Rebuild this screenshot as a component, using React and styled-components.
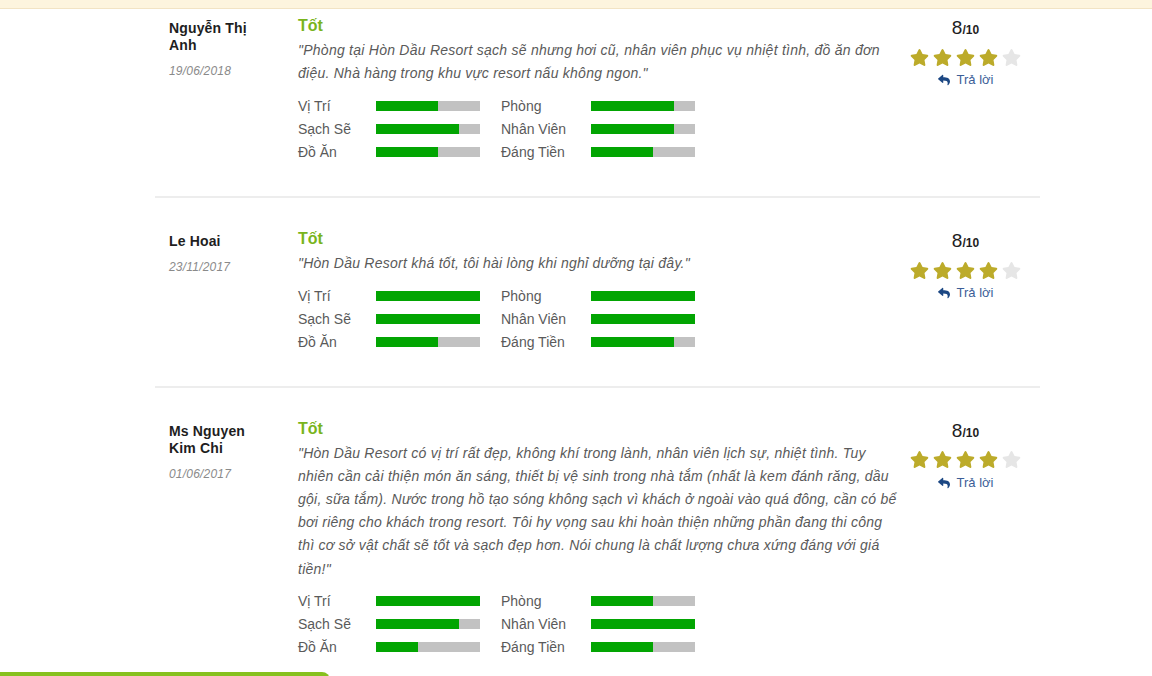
import React from 'react'
import styled, { createGlobalStyle } from 'styled-components'
import { FaStar, FaReply } from 'react-icons/fa'

const GlobalStyle = createGlobalStyle`
  body {
    margin: 0;
    background: #fff;
    font-family: "Liberation Sans", Arial, sans-serif;
    overflow: hidden;
  }
`

const TopBar = styled.div`
  height: 8px;
  background: #fdf4de;
  border-bottom: 1px solid #f2e3c4;
`

const List = styled.div`
  width: 885px;
  margin-left: 155px;
`

const Review = styled.div`
  display: grid;
  grid-template-columns: 129px 600px 135px;
  padding: ${props => (props.isFirst ? '7px 0 33px' : '31px 0 32px')};
  padding-left: 14px;
  ${props => !props.isFirst && `border-top: 2px solid #ededed;`}
`

const Author = styled.div`
  padding-top: 4px;
`

const Name = styled.div`
  width: 92px;
  font-size: 14px;
  line-height: 17px;
  font-weight: bold;
  letter-spacing: 0.15px;
  color: #1e1e1e;
`

const Date = styled.div`
  margin-top: 10px;
  font-size: 12px;
  font-style: italic;
  letter-spacing: 0.2px;
  color: #8a8a8a;
`

const Body = styled.div`
  display: flex;
  flex-direction: column;
`

const Title = styled.div`
  font-size: 16px;
  line-height: 20px;
  font-weight: bold;
  color: #79b41c;
`

const Quote = styled.div`
  margin-top: 3px;
  font-size: 14px;
  line-height: 23.2px;
  font-style: italic;
  letter-spacing: 0.25px;
  color: #5a5a5a;
`

const Ratings = styled.div`
  margin-top: 9px;
  display: grid;
  grid-template-columns: 78px 125px 90px 104px;
  grid-auto-rows: 23px;
  align-items: center;
`

const Label = styled.div`
  font-size: 14px;
  color: #5a5a5a;
`

const Track = styled.div`
  width: 104px;
  height: 10px;
  background: #c2c2c2;
  display: flex;
`

const Fill = styled.div`
  height: 100%;
  background: #02a502;
`

const Score = styled.div`
  display: flex;
  flex-direction: column;
  align-items: center;
  padding-top: 1px;
`

const Mark = styled.div`
  font-size: 19px;
  line-height: 22px;
  color: #1e1e1e;

  small {
    font-size: 12px;
    font-weight: bold;
  }
`

const Stars = styled.div`
  display: flex;
  gap: 4px;
  margin-top: 6px;
  height: 20px;
  align-items: center;
`

const Star = styled(FaStar)`
  color: ${props => (props.$on ? '#bcab2a' : '#e6e6e6')};
`

const Reply = styled.a`
  display: flex;
  align-items: center;
  gap: 7px;
  margin-top: 5px;
  font-size: 13px;
  line-height: 16px;
  color: #3c5e97;
  text-decoration: none;

  svg {
    color: #1c4783;
  }
`

const BottomButton = styled.div`
  position: fixed;
  left: 0;
  bottom: -36px;
  width: 330px;
  height: 40px;
  background: #86c11f;
  border-top-right-radius: 8px;
`

const reviews = [
  {
    name: 'Nguyễn Thị Anh',
    date: '19/06/2018',
    text: '"Phòng tại Hòn Dầu Resort sạch sẽ nhưng hơi cũ, nhân viên phục vụ nhiệt tình, đồ ăn đơn điệu. Nhà hàng trong khu vực resort nấu không ngon."',
    scores: [60, 80, 80, 80, 60, 60],
  },
  {
    name: 'Le Hoai',
    date: '23/11/2017',
    text: '"Hòn Dầu Resort khá tốt, tôi hài lòng khi nghỉ dưỡng tại đây."',
    scores: [100, 100, 100, 100, 60, 80],
  },
  {
    name: 'Ms Nguyen Kim Chi',
    date: '01/06/2017',
    text: '"Hòn Dầu Resort có vị trí rất đẹp, không khí trong lành, nhân viên lịch sự, nhiệt tình. Tuy nhiên cần cải thiện món ăn sáng, thiết bị vệ sinh trong nhà tắm (nhất là kem đánh răng, dầu gội, sữa tắm). Nước trong hồ tạo sóng không sạch vì khách ở ngoài vào quá đông, cần có bể bơi riêng cho khách trong resort. Tôi hy vọng sau khi hoàn thiện những phần đang thi công thì cơ sở vật chất sẽ tốt và sạch đẹp hơn. Nói chung là chất lượng chưa xứng đáng với giá tiền!"',
    scores: [100, 60, 80, 100, 40, 60],
  },
]

const labels = ['Vị Trí', 'Phòng', 'Sạch Sẽ', 'Nhân Viên', 'Đồ Ăn', 'Đáng Tiền']

export default function App() {
  return (
    <>
      <GlobalStyle />
      <TopBar />
      <List>
        {reviews.map((review, index) => (
          <Review key={index} isFirst={index === 0}>
            <Author>
              <Name>{review.name}</Name>
              <Date>{review.date}</Date>
            </Author>

            <Body>
              <Title>Tốt</Title>
              <Quote>{review.text}</Quote>
              <Ratings>
                {labels.map((label, i) => (
                  <React.Fragment key={label}>
                    <Label>{label}</Label>
                    <Track>
                      <Fill style={{ width: `${review.scores[i]}%` }} />
                    </Track>
                  </React.Fragment>
                ))}
              </Ratings>
            </Body>

            <Score>
              <Mark>
                8<small>/10</small>
              </Mark>
              <Stars>
                {[0, 1, 2, 3, 4].map(i => (
                  <Star key={i} size={19} $on={i < 4} />
                ))}
              </Stars>
              <Reply href="#">
                <FaReply size={12} />
                Trả lời
              </Reply>
            </Score>
          </Review>
        ))}
      </List>
      <BottomButton />
    </>
  )
}
